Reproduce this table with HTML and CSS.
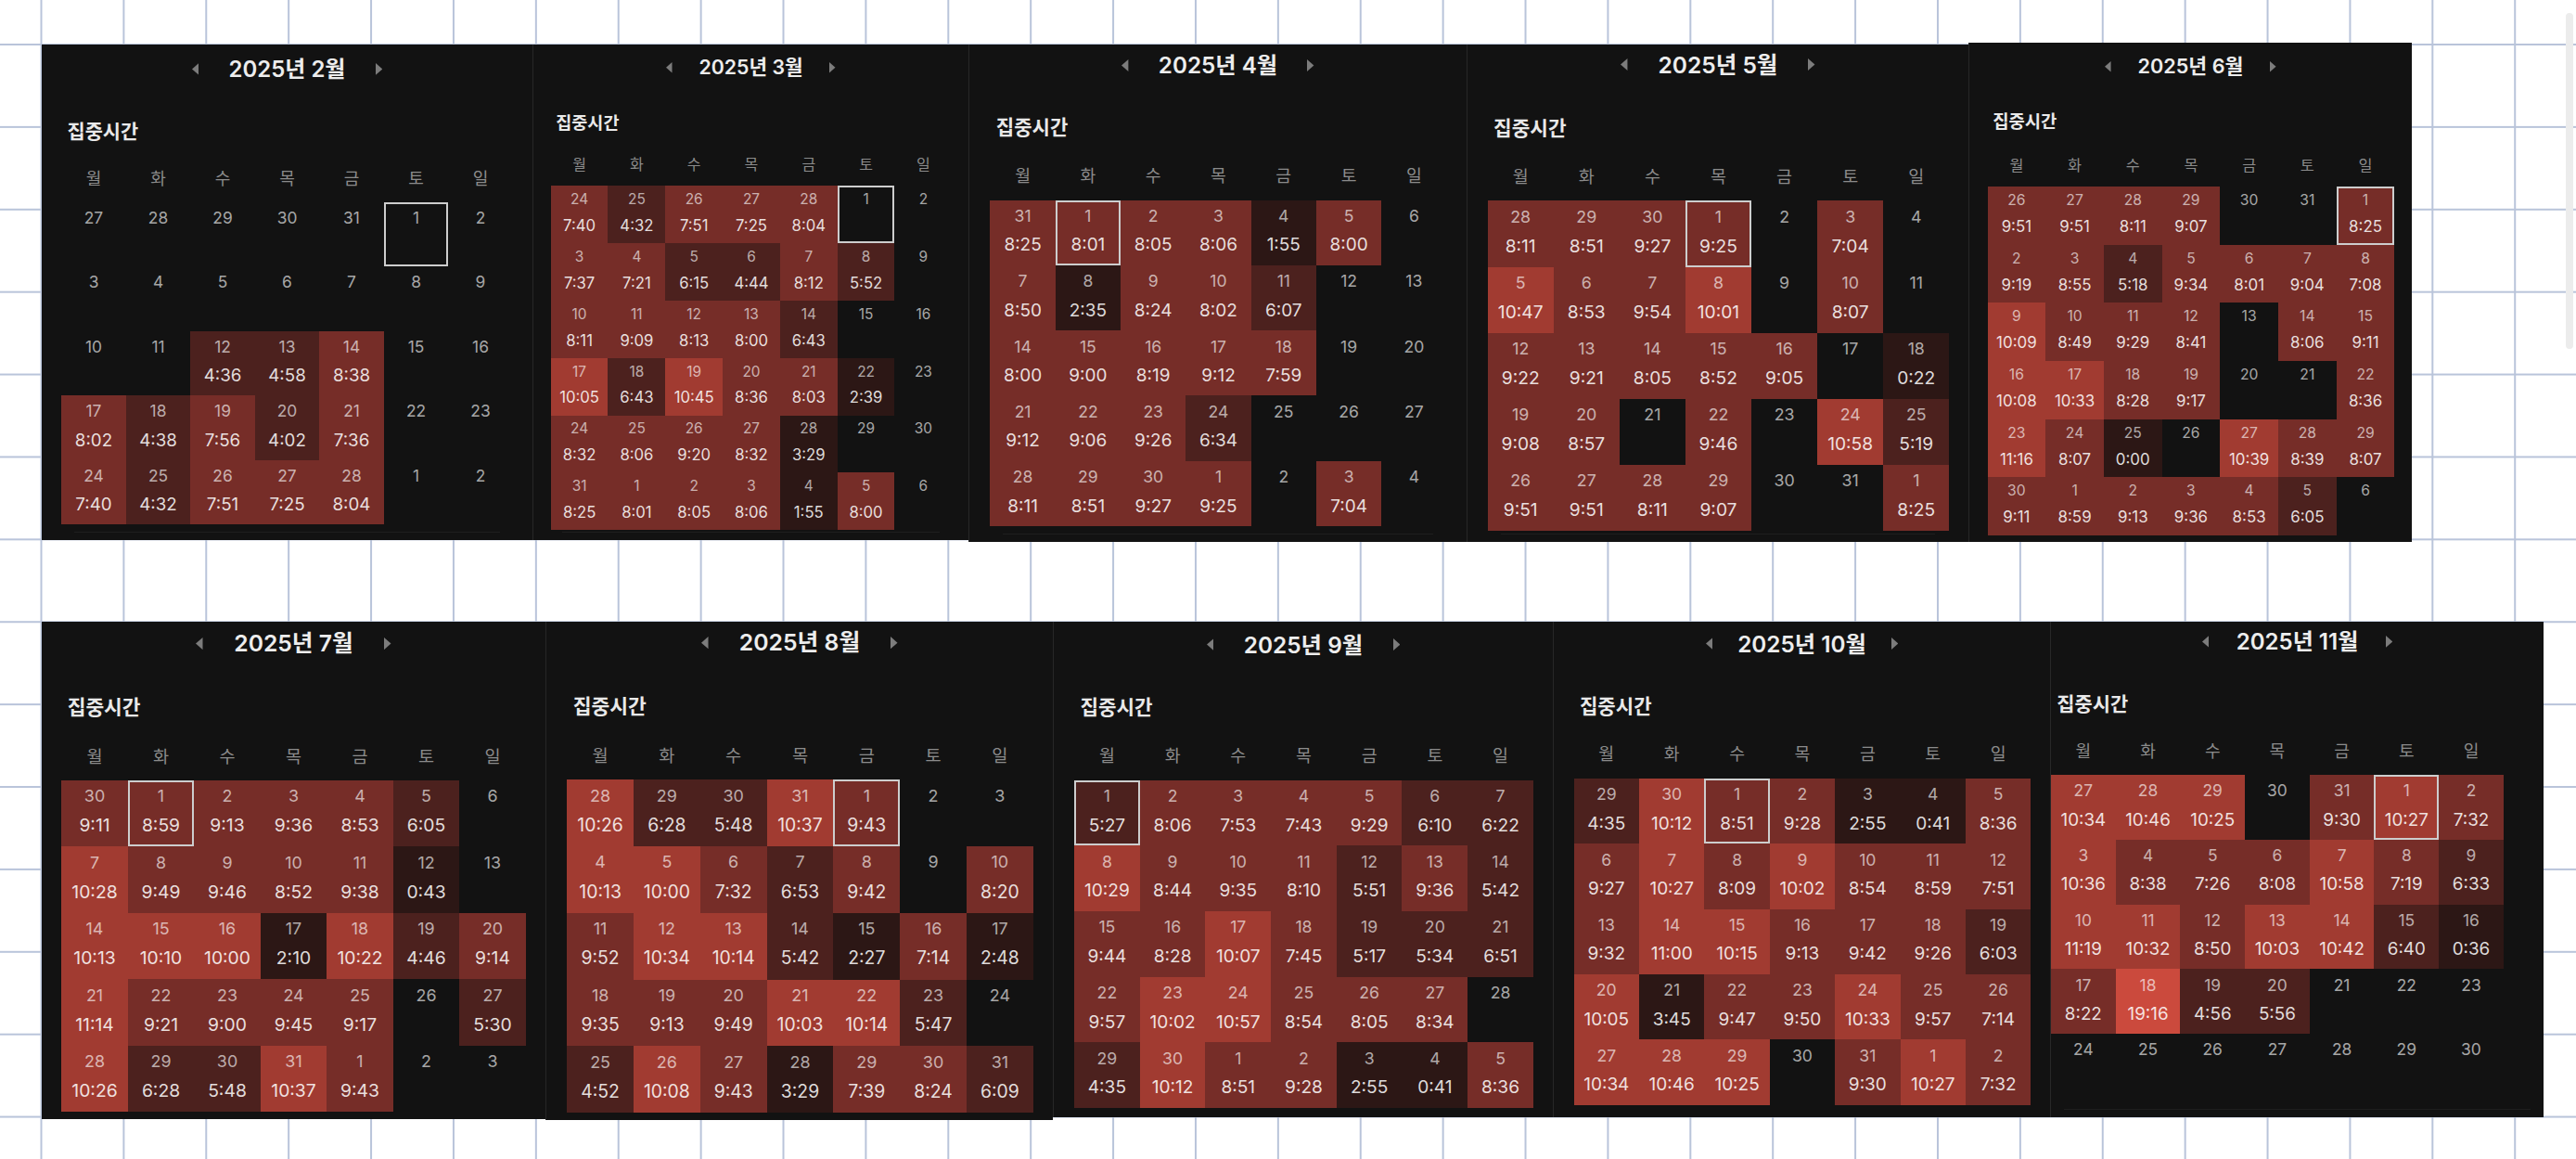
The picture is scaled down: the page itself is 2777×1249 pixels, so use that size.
FILE: index.html
```html
<!DOCTYPE html>
<html lang="ko">
<head>
<meta charset="utf-8">
<title>집중시간 캘린더</title>
<link rel="stylesheet" href="styles.css">
</head>
<body>
<main class="board">
  <div class="row">
    <section class="cal cal--feb">
      <header class="cal__head">
        <svg class="cal__arrow" viewBox="0 0 8 14"><path d="M8 0L0 7l8 7z"/></svg>
        <h2 class="cal__title">2025년 2월</h2>
        <svg class="cal__arrow" viewBox="0 0 8 14"><path d="M0 0l8 7-8 7z"/></svg>
      </header>
      <h3 class="cal__label">집중시간</h3>
      <div class="cal__days"><span>월</span><span>화</span><span>수</span><span>목</span><span>금</span><span>토</span><span>일</span></div>
      <div class="cal__grid">
        <div class="c"><p class="n">27</p></div><div class="c"><p class="n">28</p></div><div class="c"><p class="n">29</p></div><div class="c"><p class="n">30</p></div><div class="c"><p class="n">31</p></div><div class="c sel"><p class="n">1</p></div><div class="c"><p class="n">2</p></div>
        <div class="c"><p class="n">3</p></div><div class="c"><p class="n">4</p></div><div class="c"><p class="n">5</p></div><div class="c"><p class="n">6</p></div><div class="c"><p class="n">7</p></div><div class="c"><p class="n">8</p></div><div class="c"><p class="n">9</p></div>
        <div class="c"><p class="n">10</p></div><div class="c"><p class="n">11</p></div><div class="c l2"><p class="n">12</p><p class="v">4:36</p></div><div class="c l2"><p class="n">13</p><p class="v">4:58</p></div><div class="c l3"><p class="n">14</p><p class="v">8:38</p></div><div class="c"><p class="n">15</p></div><div class="c"><p class="n">16</p></div>
        <div class="c l3"><p class="n">17</p><p class="v">8:02</p></div><div class="c l2"><p class="n">18</p><p class="v">4:38</p></div><div class="c l3"><p class="n">19</p><p class="v">7:56</p></div><div class="c l2"><p class="n">20</p><p class="v">4:02</p></div><div class="c l3"><p class="n">21</p><p class="v">7:36</p></div><div class="c"><p class="n">22</p></div><div class="c"><p class="n">23</p></div>
        <div class="c l3"><p class="n">24</p><p class="v">7:40</p></div><div class="c l2"><p class="n">25</p><p class="v">4:32</p></div><div class="c l3"><p class="n">26</p><p class="v">7:51</p></div><div class="c l3"><p class="n">27</p><p class="v">7:25</p></div><div class="c l3"><p class="n">28</p><p class="v">8:04</p></div><div class="c"><p class="n">1</p></div><div class="c"><p class="n">2</p></div>
      </div>
      <div class="cal__rule"></div>
    </section>

    <section class="cal cal--mar">
      <header class="cal__head">
        <svg class="cal__arrow" viewBox="0 0 8 14"><path d="M8 0L0 7l8 7z"/></svg>
        <h2 class="cal__title">2025년 3월</h2>
        <svg class="cal__arrow" viewBox="0 0 8 14"><path d="M0 0l8 7-8 7z"/></svg>
      </header>
      <h3 class="cal__label">집중시간</h3>
      <div class="cal__days"><span>월</span><span>화</span><span>수</span><span>목</span><span>금</span><span>토</span><span>일</span></div>
      <div class="cal__grid">
        <div class="c l3"><p class="n">24</p><p class="v">7:40</p></div><div class="c l2"><p class="n">25</p><p class="v">4:32</p></div><div class="c l3"><p class="n">26</p><p class="v">7:51</p></div><div class="c l3"><p class="n">27</p><p class="v">7:25</p></div><div class="c l3"><p class="n">28</p><p class="v">8:04</p></div><div class="c sel"><p class="n">1</p></div><div class="c"><p class="n">2</p></div>
        <div class="c l3"><p class="n">3</p><p class="v">7:37</p></div><div class="c l3"><p class="n">4</p><p class="v">7:21</p></div><div class="c l2"><p class="n">5</p><p class="v">6:15</p></div><div class="c l2"><p class="n">6</p><p class="v">4:44</p></div><div class="c l3"><p class="n">7</p><p class="v">8:12</p></div><div class="c l2"><p class="n">8</p><p class="v">5:52</p></div><div class="c"><p class="n">9</p></div>
        <div class="c l3"><p class="n">10</p><p class="v">8:11</p></div><div class="c l3"><p class="n">11</p><p class="v">9:09</p></div><div class="c l3"><p class="n">12</p><p class="v">8:13</p></div><div class="c l3"><p class="n">13</p><p class="v">8:00</p></div><div class="c l2"><p class="n">14</p><p class="v">6:43</p></div><div class="c"><p class="n">15</p></div><div class="c"><p class="n">16</p></div>
        <div class="c l4"><p class="n">17</p><p class="v">10:05</p></div><div class="c l2"><p class="n">18</p><p class="v">6:43</p></div><div class="c l4"><p class="n">19</p><p class="v">10:45</p></div><div class="c l3"><p class="n">20</p><p class="v">8:36</p></div><div class="c l3"><p class="n">21</p><p class="v">8:03</p></div><div class="c l1"><p class="n">22</p><p class="v">2:39</p></div><div class="c"><p class="n">23</p></div>
        <div class="c l3"><p class="n">24</p><p class="v">8:32</p></div><div class="c l3"><p class="n">25</p><p class="v">8:06</p></div><div class="c l3"><p class="n">26</p><p class="v">9:20</p></div><div class="c l3"><p class="n">27</p><p class="v">8:32</p></div><div class="c l1"><p class="n">28</p><p class="v">3:29</p></div><div class="c"><p class="n">29</p></div><div class="c"><p class="n">30</p></div>
        <div class="c l3"><p class="n">31</p><p class="v">8:25</p></div><div class="c l3"><p class="n">1</p><p class="v">8:01</p></div><div class="c l3"><p class="n">2</p><p class="v">8:05</p></div><div class="c l3"><p class="n">3</p><p class="v">8:06</p></div><div class="c l1"><p class="n">4</p><p class="v">1:55</p></div><div class="c l3"><p class="n">5</p><p class="v">8:00</p></div><div class="c"><p class="n">6</p></div>
      </div>
      <div class="cal__rule"></div>
    </section>

    <section class="cal cal--apr">
      <header class="cal__head">
        <svg class="cal__arrow" viewBox="0 0 8 14"><path d="M8 0L0 7l8 7z"/></svg>
        <h2 class="cal__title">2025년 4월</h2>
        <svg class="cal__arrow" viewBox="0 0 8 14"><path d="M0 0l8 7-8 7z"/></svg>
      </header>
      <h3 class="cal__label">집중시간</h3>
      <div class="cal__days"><span>월</span><span>화</span><span>수</span><span>목</span><span>금</span><span>토</span><span>일</span></div>
      <div class="cal__grid">
        <div class="c l3"><p class="n">31</p><p class="v">8:25</p></div><div class="c l3 sel"><p class="n">1</p><p class="v">8:01</p></div><div class="c l3"><p class="n">2</p><p class="v">8:05</p></div><div class="c l3"><p class="n">3</p><p class="v">8:06</p></div><div class="c l1"><p class="n">4</p><p class="v">1:55</p></div><div class="c l3"><p class="n">5</p><p class="v">8:00</p></div><div class="c"><p class="n">6</p></div>
        <div class="c l3"><p class="n">7</p><p class="v">8:50</p></div><div class="c l1"><p class="n">8</p><p class="v">2:35</p></div><div class="c l3"><p class="n">9</p><p class="v">8:24</p></div><div class="c l3"><p class="n">10</p><p class="v">8:02</p></div><div class="c l2"><p class="n">11</p><p class="v">6:07</p></div><div class="c"><p class="n">12</p></div><div class="c"><p class="n">13</p></div>
        <div class="c l3"><p class="n">14</p><p class="v">8:00</p></div><div class="c l3"><p class="n">15</p><p class="v">9:00</p></div><div class="c l3"><p class="n">16</p><p class="v">8:19</p></div><div class="c l3"><p class="n">17</p><p class="v">9:12</p></div><div class="c l3"><p class="n">18</p><p class="v">7:59</p></div><div class="c"><p class="n">19</p></div><div class="c"><p class="n">20</p></div>
        <div class="c l3"><p class="n">21</p><p class="v">9:12</p></div><div class="c l3"><p class="n">22</p><p class="v">9:06</p></div><div class="c l3"><p class="n">23</p><p class="v">9:26</p></div><div class="c l2"><p class="n">24</p><p class="v">6:34</p></div><div class="c"><p class="n">25</p></div><div class="c"><p class="n">26</p></div><div class="c"><p class="n">27</p></div>
        <div class="c l3"><p class="n">28</p><p class="v">8:11</p></div><div class="c l3"><p class="n">29</p><p class="v">8:51</p></div><div class="c l3"><p class="n">30</p><p class="v">9:27</p></div><div class="c l3"><p class="n">1</p><p class="v">9:25</p></div><div class="c"><p class="n">2</p></div><div class="c l3"><p class="n">3</p><p class="v">7:04</p></div><div class="c"><p class="n">4</p></div>
      </div>
      <div class="cal__rule"></div>
    </section>

    <section class="cal cal--may">
      <header class="cal__head">
        <svg class="cal__arrow" viewBox="0 0 8 14"><path d="M8 0L0 7l8 7z"/></svg>
        <h2 class="cal__title">2025년 5월</h2>
        <svg class="cal__arrow" viewBox="0 0 8 14"><path d="M0 0l8 7-8 7z"/></svg>
      </header>
      <h3 class="cal__label">집중시간</h3>
      <div class="cal__days"><span>월</span><span>화</span><span>수</span><span>목</span><span>금</span><span>토</span><span>일</span></div>
      <div class="cal__grid">
        <div class="c l3"><p class="n">28</p><p class="v">8:11</p></div><div class="c l3"><p class="n">29</p><p class="v">8:51</p></div><div class="c l3"><p class="n">30</p><p class="v">9:27</p></div><div class="c l3 sel"><p class="n">1</p><p class="v">9:25</p></div><div class="c"><p class="n">2</p></div><div class="c l3"><p class="n">3</p><p class="v">7:04</p></div><div class="c"><p class="n">4</p></div>
        <div class="c l4"><p class="n">5</p><p class="v">10:47</p></div><div class="c l3"><p class="n">6</p><p class="v">8:53</p></div><div class="c l3"><p class="n">7</p><p class="v">9:54</p></div><div class="c l4"><p class="n">8</p><p class="v">10:01</p></div><div class="c"><p class="n">9</p></div><div class="c l3"><p class="n">10</p><p class="v">8:07</p></div><div class="c"><p class="n">11</p></div>
        <div class="c l3"><p class="n">12</p><p class="v">9:22</p></div><div class="c l3"><p class="n">13</p><p class="v">9:21</p></div><div class="c l3"><p class="n">14</p><p class="v">8:05</p></div><div class="c l3"><p class="n">15</p><p class="v">8:52</p></div><div class="c l3"><p class="n">16</p><p class="v">9:05</p></div><div class="c"><p class="n">17</p></div><div class="c l1"><p class="n">18</p><p class="v">0:22</p></div>
        <div class="c l3"><p class="n">19</p><p class="v">9:08</p></div><div class="c l3"><p class="n">20</p><p class="v">8:57</p></div><div class="c"><p class="n">21</p></div><div class="c l3"><p class="n">22</p><p class="v">9:46</p></div><div class="c"><p class="n">23</p></div><div class="c l4"><p class="n">24</p><p class="v">10:58</p></div><div class="c l2"><p class="n">25</p><p class="v">5:19</p></div>
        <div class="c l3"><p class="n">26</p><p class="v">9:51</p></div><div class="c l3"><p class="n">27</p><p class="v">9:51</p></div><div class="c l3"><p class="n">28</p><p class="v">8:11</p></div><div class="c l3"><p class="n">29</p><p class="v">9:07</p></div><div class="c"><p class="n">30</p></div><div class="c"><p class="n">31</p></div><div class="c l3"><p class="n">1</p><p class="v">8:25</p></div>
      </div>
      <div class="cal__rule"></div>
    </section>

    <section class="cal cal--jun">
      <header class="cal__head">
        <svg class="cal__arrow" viewBox="0 0 8 14"><path d="M8 0L0 7l8 7z"/></svg>
        <h2 class="cal__title">2025년 6월</h2>
        <svg class="cal__arrow" viewBox="0 0 8 14"><path d="M0 0l8 7-8 7z"/></svg>
      </header>
      <h3 class="cal__label">집중시간</h3>
      <div class="cal__days"><span>월</span><span>화</span><span>수</span><span>목</span><span>금</span><span>토</span><span>일</span></div>
      <div class="cal__grid">
        <div class="c l3"><p class="n">26</p><p class="v">9:51</p></div><div class="c l3"><p class="n">27</p><p class="v">9:51</p></div><div class="c l3"><p class="n">28</p><p class="v">8:11</p></div><div class="c l3"><p class="n">29</p><p class="v">9:07</p></div><div class="c"><p class="n">30</p></div><div class="c"><p class="n">31</p></div><div class="c l3 sel"><p class="n">1</p><p class="v">8:25</p></div>
        <div class="c l3"><p class="n">2</p><p class="v">9:19</p></div><div class="c l3"><p class="n">3</p><p class="v">8:55</p></div><div class="c l2"><p class="n">4</p><p class="v">5:18</p></div><div class="c l3"><p class="n">5</p><p class="v">9:34</p></div><div class="c l3"><p class="n">6</p><p class="v">8:01</p></div><div class="c l3"><p class="n">7</p><p class="v">9:04</p></div><div class="c l3"><p class="n">8</p><p class="v">7:08</p></div>
        <div class="c l4"><p class="n">9</p><p class="v">10:09</p></div><div class="c l3"><p class="n">10</p><p class="v">8:49</p></div><div class="c l3"><p class="n">11</p><p class="v">9:29</p></div><div class="c l3"><p class="n">12</p><p class="v">8:41</p></div><div class="c"><p class="n">13</p></div><div class="c l3"><p class="n">14</p><p class="v">8:06</p></div><div class="c l3"><p class="n">15</p><p class="v">9:11</p></div>
        <div class="c l4"><p class="n">16</p><p class="v">10:08</p></div><div class="c l4"><p class="n">17</p><p class="v">10:33</p></div><div class="c l3"><p class="n">18</p><p class="v">8:28</p></div><div class="c l3"><p class="n">19</p><p class="v">9:17</p></div><div class="c"><p class="n">20</p></div><div class="c"><p class="n">21</p></div><div class="c l3"><p class="n">22</p><p class="v">8:36</p></div>
        <div class="c l4"><p class="n">23</p><p class="v">11:16</p></div><div class="c l3"><p class="n">24</p><p class="v">8:07</p></div><div class="c l1"><p class="n">25</p><p class="v">0:00</p></div><div class="c"><p class="n">26</p></div><div class="c l4"><p class="n">27</p><p class="v">10:39</p></div><div class="c l3"><p class="n">28</p><p class="v">8:39</p></div><div class="c l3"><p class="n">29</p><p class="v">8:07</p></div>
        <div class="c l3"><p class="n">30</p><p class="v">9:11</p></div><div class="c l3"><p class="n">1</p><p class="v">8:59</p></div><div class="c l3"><p class="n">2</p><p class="v">9:13</p></div><div class="c l3"><p class="n">3</p><p class="v">9:36</p></div><div class="c l3"><p class="n">4</p><p class="v">8:53</p></div><div class="c l2"><p class="n">5</p><p class="v">6:05</p></div><div class="c"><p class="n">6</p></div>
      </div>
    </section>
  </div>

  <div class="row">
    <section class="cal cal--jul">
      <header class="cal__head">
        <svg class="cal__arrow" viewBox="0 0 8 14"><path d="M8 0L0 7l8 7z"/></svg>
        <h2 class="cal__title">2025년 7월</h2>
        <svg class="cal__arrow" viewBox="0 0 8 14"><path d="M0 0l8 7-8 7z"/></svg>
      </header>
      <h3 class="cal__label">집중시간</h3>
      <div class="cal__days"><span>월</span><span>화</span><span>수</span><span>목</span><span>금</span><span>토</span><span>일</span></div>
      <div class="cal__grid">
        <div class="c l3"><p class="n">30</p><p class="v">9:11</p></div><div class="c l3 sel"><p class="n">1</p><p class="v">8:59</p></div><div class="c l3"><p class="n">2</p><p class="v">9:13</p></div><div class="c l3"><p class="n">3</p><p class="v">9:36</p></div><div class="c l3"><p class="n">4</p><p class="v">8:53</p></div><div class="c l2"><p class="n">5</p><p class="v">6:05</p></div><div class="c"><p class="n">6</p></div>
        <div class="c l4"><p class="n">7</p><p class="v">10:28</p></div><div class="c l3"><p class="n">8</p><p class="v">9:49</p></div><div class="c l3"><p class="n">9</p><p class="v">9:46</p></div><div class="c l3"><p class="n">10</p><p class="v">8:52</p></div><div class="c l3"><p class="n">11</p><p class="v">9:38</p></div><div class="c l1"><p class="n">12</p><p class="v">0:43</p></div><div class="c"><p class="n">13</p></div>
        <div class="c l4"><p class="n">14</p><p class="v">10:13</p></div><div class="c l4"><p class="n">15</p><p class="v">10:10</p></div><div class="c l4"><p class="n">16</p><p class="v">10:00</p></div><div class="c l1"><p class="n">17</p><p class="v">2:10</p></div><div class="c l4"><p class="n">18</p><p class="v">10:22</p></div><div class="c l2"><p class="n">19</p><p class="v">4:46</p></div><div class="c l3"><p class="n">20</p><p class="v">9:14</p></div>
        <div class="c l4"><p class="n">21</p><p class="v">11:14</p></div><div class="c l3"><p class="n">22</p><p class="v">9:21</p></div><div class="c l3"><p class="n">23</p><p class="v">9:00</p></div><div class="c l3"><p class="n">24</p><p class="v">9:45</p></div><div class="c l3"><p class="n">25</p><p class="v">9:17</p></div><div class="c"><p class="n">26</p></div><div class="c l2"><p class="n">27</p><p class="v">5:30</p></div>
        <div class="c l4"><p class="n">28</p><p class="v">10:26</p></div><div class="c l2"><p class="n">29</p><p class="v">6:28</p></div><div class="c l2"><p class="n">30</p><p class="v">5:48</p></div><div class="c l4"><p class="n">31</p><p class="v">10:37</p></div><div class="c l3"><p class="n">1</p><p class="v">9:43</p></div><div class="c"><p class="n">2</p></div><div class="c"><p class="n">3</p></div>
      </div>
    </section>

    <section class="cal cal--aug">
      <header class="cal__head">
        <svg class="cal__arrow" viewBox="0 0 8 14"><path d="M8 0L0 7l8 7z"/></svg>
        <h2 class="cal__title">2025년 8월</h2>
        <svg class="cal__arrow" viewBox="0 0 8 14"><path d="M0 0l8 7-8 7z"/></svg>
      </header>
      <h3 class="cal__label">집중시간</h3>
      <div class="cal__days"><span>월</span><span>화</span><span>수</span><span>목</span><span>금</span><span>토</span><span>일</span></div>
      <div class="cal__grid">
        <div class="c l4"><p class="n">28</p><p class="v">10:26</p></div><div class="c l2"><p class="n">29</p><p class="v">6:28</p></div><div class="c l2"><p class="n">30</p><p class="v">5:48</p></div><div class="c l4"><p class="n">31</p><p class="v">10:37</p></div><div class="c l3 sel"><p class="n">1</p><p class="v">9:43</p></div><div class="c"><p class="n">2</p></div><div class="c"><p class="n">3</p></div>
        <div class="c l4"><p class="n">4</p><p class="v">10:13</p></div><div class="c l4"><p class="n">5</p><p class="v">10:00</p></div><div class="c l3"><p class="n">6</p><p class="v">7:32</p></div><div class="c l2"><p class="n">7</p><p class="v">6:53</p></div><div class="c l3"><p class="n">8</p><p class="v">9:42</p></div><div class="c"><p class="n">9</p></div><div class="c l3"><p class="n">10</p><p class="v">8:20</p></div>
        <div class="c l3"><p class="n">11</p><p class="v">9:52</p></div><div class="c l4"><p class="n">12</p><p class="v">10:34</p></div><div class="c l4"><p class="n">13</p><p class="v">10:14</p></div><div class="c l2"><p class="n">14</p><p class="v">5:42</p></div><div class="c l1"><p class="n">15</p><p class="v">2:27</p></div><div class="c l3"><p class="n">16</p><p class="v">7:14</p></div><div class="c l1"><p class="n">17</p><p class="v">2:48</p></div>
        <div class="c l3"><p class="n">18</p><p class="v">9:35</p></div><div class="c l3"><p class="n">19</p><p class="v">9:13</p></div><div class="c l3"><p class="n">20</p><p class="v">9:49</p></div><div class="c l4"><p class="n">21</p><p class="v">10:03</p></div><div class="c l4"><p class="n">22</p><p class="v">10:14</p></div><div class="c l2"><p class="n">23</p><p class="v">5:47</p></div><div class="c"><p class="n">24</p></div>
        <div class="c l2"><p class="n">25</p><p class="v">4:52</p></div><div class="c l4"><p class="n">26</p><p class="v">10:08</p></div><div class="c l3"><p class="n">27</p><p class="v">9:43</p></div><div class="c l1"><p class="n">28</p><p class="v">3:29</p></div><div class="c l3"><p class="n">29</p><p class="v">7:39</p></div><div class="c l3"><p class="n">30</p><p class="v">8:24</p></div><div class="c l2"><p class="n">31</p><p class="v">6:09</p></div>
      </div>
    </section>

    <section class="cal cal--sep">
      <header class="cal__head">
        <svg class="cal__arrow" viewBox="0 0 8 14"><path d="M8 0L0 7l8 7z"/></svg>
        <h2 class="cal__title">2025년 9월</h2>
        <svg class="cal__arrow" viewBox="0 0 8 14"><path d="M0 0l8 7-8 7z"/></svg>
      </header>
      <h3 class="cal__label">집중시간</h3>
      <div class="cal__days"><span>월</span><span>화</span><span>수</span><span>목</span><span>금</span><span>토</span><span>일</span></div>
      <div class="cal__grid">
        <div class="c l2 sel"><p class="n">1</p><p class="v">5:27</p></div><div class="c l3"><p class="n">2</p><p class="v">8:06</p></div><div class="c l3"><p class="n">3</p><p class="v">7:53</p></div><div class="c l3"><p class="n">4</p><p class="v">7:43</p></div><div class="c l3"><p class="n">5</p><p class="v">9:29</p></div><div class="c l2"><p class="n">6</p><p class="v">6:10</p></div><div class="c l2"><p class="n">7</p><p class="v">6:22</p></div>
        <div class="c l4"><p class="n">8</p><p class="v">10:29</p></div><div class="c l3"><p class="n">9</p><p class="v">8:44</p></div><div class="c l3"><p class="n">10</p><p class="v">9:35</p></div><div class="c l3"><p class="n">11</p><p class="v">8:10</p></div><div class="c l2"><p class="n">12</p><p class="v">5:51</p></div><div class="c l3"><p class="n">13</p><p class="v">9:36</p></div><div class="c l2"><p class="n">14</p><p class="v">5:42</p></div>
        <div class="c l3"><p class="n">15</p><p class="v">9:44</p></div><div class="c l3"><p class="n">16</p><p class="v">8:28</p></div><div class="c l4"><p class="n">17</p><p class="v">10:07</p></div><div class="c l3"><p class="n">18</p><p class="v">7:45</p></div><div class="c l2"><p class="n">19</p><p class="v">5:17</p></div><div class="c l2"><p class="n">20</p><p class="v">5:34</p></div><div class="c l2"><p class="n">21</p><p class="v">6:51</p></div>
        <div class="c l3"><p class="n">22</p><p class="v">9:57</p></div><div class="c l4"><p class="n">23</p><p class="v">10:02</p></div><div class="c l4"><p class="n">24</p><p class="v">10:57</p></div><div class="c l3"><p class="n">25</p><p class="v">8:54</p></div><div class="c l3"><p class="n">26</p><p class="v">8:05</p></div><div class="c l3"><p class="n">27</p><p class="v">8:34</p></div><div class="c"><p class="n">28</p></div>
        <div class="c l2"><p class="n">29</p><p class="v">4:35</p></div><div class="c l4"><p class="n">30</p><p class="v">10:12</p></div><div class="c l3"><p class="n">1</p><p class="v">8:51</p></div><div class="c l3"><p class="n">2</p><p class="v">9:28</p></div><div class="c l1"><p class="n">3</p><p class="v">2:55</p></div><div class="c l1"><p class="n">4</p><p class="v">0:41</p></div><div class="c l3"><p class="n">5</p><p class="v">8:36</p></div>
      </div>
    </section>

    <section class="cal cal--oct">
      <header class="cal__head">
        <svg class="cal__arrow" viewBox="0 0 8 14"><path d="M8 0L0 7l8 7z"/></svg>
        <h2 class="cal__title">2025년 10월</h2>
        <svg class="cal__arrow" viewBox="0 0 8 14"><path d="M0 0l8 7-8 7z"/></svg>
      </header>
      <h3 class="cal__label">집중시간</h3>
      <div class="cal__days"><span>월</span><span>화</span><span>수</span><span>목</span><span>금</span><span>토</span><span>일</span></div>
      <div class="cal__grid">
        <div class="c l2"><p class="n">29</p><p class="v">4:35</p></div><div class="c l4"><p class="n">30</p><p class="v">10:12</p></div><div class="c l3 sel"><p class="n">1</p><p class="v">8:51</p></div><div class="c l3"><p class="n">2</p><p class="v">9:28</p></div><div class="c l1"><p class="n">3</p><p class="v">2:55</p></div><div class="c l1"><p class="n">4</p><p class="v">0:41</p></div><div class="c l3"><p class="n">5</p><p class="v">8:36</p></div>
        <div class="c l3"><p class="n">6</p><p class="v">9:27</p></div><div class="c l4"><p class="n">7</p><p class="v">10:27</p></div><div class="c l3"><p class="n">8</p><p class="v">8:09</p></div><div class="c l4"><p class="n">9</p><p class="v">10:02</p></div><div class="c l3"><p class="n">10</p><p class="v">8:54</p></div><div class="c l3"><p class="n">11</p><p class="v">8:59</p></div><div class="c l3"><p class="n">12</p><p class="v">7:51</p></div>
        <div class="c l3"><p class="n">13</p><p class="v">9:32</p></div><div class="c l4"><p class="n">14</p><p class="v">11:00</p></div><div class="c l4"><p class="n">15</p><p class="v">10:15</p></div><div class="c l3"><p class="n">16</p><p class="v">9:13</p></div><div class="c l3"><p class="n">17</p><p class="v">9:42</p></div><div class="c l3"><p class="n">18</p><p class="v">9:26</p></div><div class="c l2"><p class="n">19</p><p class="v">6:03</p></div>
        <div class="c l4"><p class="n">20</p><p class="v">10:05</p></div><div class="c l1"><p class="n">21</p><p class="v">3:45</p></div><div class="c l3"><p class="n">22</p><p class="v">9:47</p></div><div class="c l3"><p class="n">23</p><p class="v">9:50</p></div><div class="c l4"><p class="n">24</p><p class="v">10:33</p></div><div class="c l3"><p class="n">25</p><p class="v">9:57</p></div><div class="c l3"><p class="n">26</p><p class="v">7:14</p></div>
        <div class="c l4"><p class="n">27</p><p class="v">10:34</p></div><div class="c l4"><p class="n">28</p><p class="v">10:46</p></div><div class="c l4"><p class="n">29</p><p class="v">10:25</p></div><div class="c"><p class="n">30</p></div><div class="c l3"><p class="n">31</p><p class="v">9:30</p></div><div class="c l4"><p class="n">1</p><p class="v">10:27</p></div><div class="c l3"><p class="n">2</p><p class="v">7:32</p></div>
      </div>
    </section>

    <section class="cal cal--nov">
      <header class="cal__head">
        <svg class="cal__arrow" viewBox="0 0 8 14"><path d="M8 0L0 7l8 7z"/></svg>
        <h2 class="cal__title">2025년 11월</h2>
        <svg class="cal__arrow" viewBox="0 0 8 14"><path d="M0 0l8 7-8 7z"/></svg>
      </header>
      <h3 class="cal__label">집중시간</h3>
      <div class="cal__days"><span>월</span><span>화</span><span>수</span><span>목</span><span>금</span><span>토</span><span>일</span></div>
      <div class="cal__grid">
        <div class="c l4"><p class="n">27</p><p class="v">10:34</p></div><div class="c l4"><p class="n">28</p><p class="v">10:46</p></div><div class="c l4"><p class="n">29</p><p class="v">10:25</p></div><div class="c"><p class="n">30</p></div><div class="c l3"><p class="n">31</p><p class="v">9:30</p></div><div class="c l4 sel"><p class="n">1</p><p class="v">10:27</p></div><div class="c l3"><p class="n">2</p><p class="v">7:32</p></div>
        <div class="c l4"><p class="n">3</p><p class="v">10:36</p></div><div class="c l3"><p class="n">4</p><p class="v">8:38</p></div><div class="c l3"><p class="n">5</p><p class="v">7:26</p></div><div class="c l3"><p class="n">6</p><p class="v">8:08</p></div><div class="c l4"><p class="n">7</p><p class="v">10:58</p></div><div class="c l3"><p class="n">8</p><p class="v">7:19</p></div><div class="c l2"><p class="n">9</p><p class="v">6:33</p></div>
        <div class="c l4"><p class="n">10</p><p class="v">11:19</p></div><div class="c l4"><p class="n">11</p><p class="v">10:32</p></div><div class="c l3"><p class="n">12</p><p class="v">8:50</p></div><div class="c l4"><p class="n">13</p><p class="v">10:03</p></div><div class="c l4"><p class="n">14</p><p class="v">10:42</p></div><div class="c l2"><p class="n">15</p><p class="v">6:40</p></div><div class="c l1"><p class="n">16</p><p class="v">0:36</p></div>
        <div class="c l3"><p class="n">17</p><p class="v">8:22</p></div><div class="c l5"><p class="n">18</p><p class="v">19:16</p></div><div class="c l2"><p class="n">19</p><p class="v">4:56</p></div><div class="c l2"><p class="n">20</p><p class="v">5:56</p></div><div class="c"><p class="n">21</p></div><div class="c"><p class="n">22</p></div><div class="c"><p class="n">23</p></div>
        <div class="c"><p class="n">24</p></div><div class="c"><p class="n">25</p></div><div class="c"><p class="n">26</p></div><div class="c"><p class="n">27</p></div><div class="c"><p class="n">28</p></div><div class="c"><p class="n">29</p></div><div class="c"><p class="n">30</p></div>
      </div>
      <div class="cal__rule"></div>
    </section>
  </div>
</main>
<div class="scrollbar"></div>
</body>
</html>
```

FILE: styles.css
```css
* { box-sizing: border-box; margin: 0; padding: 0; }

html, body {
  width: 2777px;
  height: 1249px;
  overflow: hidden;
}

body {
  background-color: #ffffff;
  background-image:
    linear-gradient(to right, #b9c4da 2px, transparent 2px),
    linear-gradient(to bottom, #b9c4da 2px, transparent 2px);
  background-size: 88.9px 88.9px;
  background-position: 43.5px 47px;
  font-family: Inter, "Noto Sans CJK KR", "Noto Sans", sans-serif;
}

.board {
  display: flex;
  flex-direction: column;
  gap: 86px;
  padding: 48px 0 0 45px;
}

.row {
  display: flex;
  align-items: flex-start;
  height: 536px;
}

/* ---------- calendar panel ---------- */
.cal {
  --c: 70px;
  --w: 540px;
  --h: 536px;
  --pt: 0px;
  flex: none;
  width: var(--w);
  height: var(--h);
  background: #121212;
  border-left: 1px solid #272727;
  display: flex;
  flex-direction: column;
  padding: var(--pt) calc((var(--w) - 7 * var(--c)) / 2) 0;
  color: #ebebeb;
}

.cal--feb { --c: 69.5px; --w: 529px; --h: 534px; --pt: 5px; border-left: none; }
.cal--mar { --c: 61.8px; --w: 470px; --h: 534px; --pt: 6px; }
.cal--apr { --c: 70.3px; --w: 537px; --h: 536px; --pt: 1px; }
.cal--may { --c: 71.1px; --w: 541px; --h: 536px; --pt: 0px; }
.cal--jun { --c: 62.7px; --w: 478px; --h: 538.5px; --pt: 7px; margin-top: -2.5px; }
.cal--jul { --c: 71.5px; --w: 543px; --h: 536px; --pt: 1.5px; border-left: none; }
.cal--aug { --c: 71.8px; --w: 547px; --h: 537px; --pt: 0px; }
.cal--sep { --c: 70.7px; --w: 539px; --h: 534px; --pt: 3px; }
.cal--oct { --c: 70.4px; --w: 536px; --h: 534px; --pt: 2px; }
.cal--nov { --c: 69.7px; --w: 532px; --h: 534px; --pt: -3px; }

.cal__head {
  height: calc(var(--c) * 0.62);
  display: flex;
  align-items: center;
  justify-content: center;
}

.cal__arrow {
  width: calc(var(--c) * 0.105);
  height: calc(var(--c) * 0.185);
  margin: 0 calc(var(--c) * 0.07);
  fill: #7c7c7c;
  flex: none;
}

.cal__title {
  width: calc(var(--c) * 2.6);
  text-align: center;
  font-size: calc(var(--c) * 0.345);
  font-weight: 600;
  line-height: 1;
  color: #ededed;
  white-space: nowrap;
}

.cal__label {
  margin-top: calc(var(--c) * 0.425);
  height: calc(var(--c) * 0.45);
  line-height: calc(var(--c) * 0.45);
  padding-left: calc(var(--c) * 0.09);
  font-size: calc(var(--c) * 0.3);
  font-weight: 700;
  color: #e9e9e9;
}

.cal__days {
  display: grid;
  grid-template-columns: repeat(7, var(--c));
  margin-top: calc(var(--c) * 0.235);
  height: calc(var(--c) * 0.5);
  align-items: center;
  text-align: center;
  font-size: calc(var(--c) * 0.26);
  color: #8b8b8b;
}

.cal__grid {
  display: grid;
  grid-template-columns: repeat(7, var(--c));
  grid-auto-rows: var(--c);
  margin-top: calc(var(--c) * 0.14);
}

.cal__rule {
  margin: auto calc(var(--c) * 0.2) 8px;
  height: 1px;
  background: #1f1f1f;
}

/* ---------- day cell ---------- */
.c {
  padding-top: calc(var(--c) * 0.062);
  text-align: center;
}

.c p {
  height: calc(var(--c) * 0.36);
  line-height: calc(var(--c) * 0.36);
  white-space: nowrap;
}

.c .n {
  font-size: calc(var(--c) * 0.25);
  color: rgba(255, 255, 255, 0.64);
}

.c .v {
  margin-top: calc(var(--c) * 0.088);
  font-size: calc(var(--c) * 0.27);
  color: rgba(255, 255, 255, 0.86);
}

.l1 { background: #2c1715; }
.l2 { background: #4c211e; }
.l3 { background: #762d28; }
.l4 { background: #a13b31; }
.l5 { background: #cb4a3d; }

.sel { box-shadow: inset 0 0 0 2px #cdcdcd; }

/* ---------- overlay scrollbar ---------- */
.scrollbar {
  position: fixed;
  top: 14px;
  right: 3px;
  width: 8px;
  height: 362px;
  border-radius: 4px;
  background: #ececec;
}
```
